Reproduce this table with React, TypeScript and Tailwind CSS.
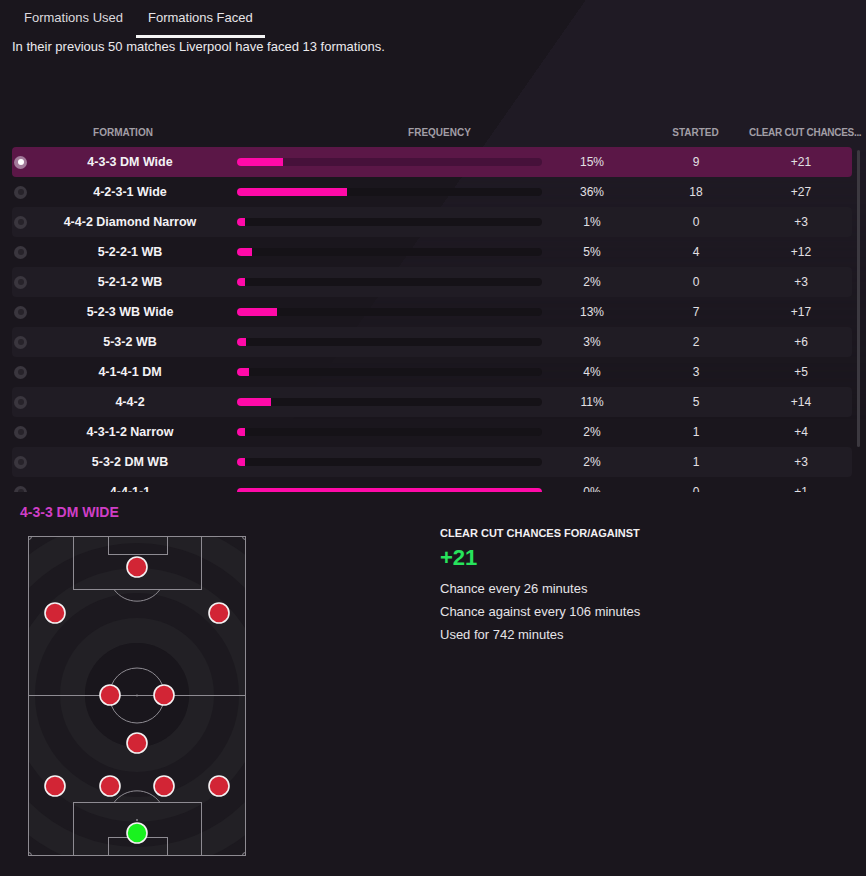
import React from "react";

type Row = { name: string; pct: number; started: number; ccc: string; full?: boolean };

const rows: Row[] = [
  { name: "4-3-3 DM Wide", pct: 15, started: 9, ccc: "+21" },
  { name: "4-2-3-1 Wide", pct: 36, started: 18, ccc: "+27" },
  { name: "4-4-2 Diamond Narrow", pct: 1, started: 0, ccc: "+3" },
  { name: "5-2-2-1 WB", pct: 5, started: 4, ccc: "+12" },
  { name: "5-2-1-2 WB", pct: 2, started: 0, ccc: "+3" },
  { name: "5-2-3 WB Wide", pct: 13, started: 7, ccc: "+17" },
  { name: "5-3-2 WB", pct: 3, started: 2, ccc: "+6" },
  { name: "4-1-4-1 DM", pct: 4, started: 3, ccc: "+5" },
  { name: "4-4-2", pct: 11, started: 5, ccc: "+14" },
  { name: "4-3-1-2 Narrow", pct: 2, started: 1, ccc: "+4" },
  { name: "5-3-2 DM WB", pct: 2, started: 1, ccc: "+3" },
  { name: "4-4-1-1", pct: 0, started: 0, ccc: "+1", full: true },
];

const players: [number, number, boolean?][] = [
  [109, 31],
  [27, 77],
  [191, 77],
  [82, 159],
  [136, 159],
  [109, 207],
  [27, 250],
  [82, 250],
  [136, 250],
  [191, 250],
  [109, 297, true],
];

function Radio({ on }: { on: boolean }) {
  if (on) {
    return (
      <div className="w-[13px] h-[13px] rounded-full bg-[#a27b9a] flex items-center justify-center">
        <div className="w-[6px] h-[6px] rounded-full bg-white" />
      </div>
    );
  }
  return (
    <div className="w-[13px] h-[13px] rounded-full bg-[#3a363e] flex items-center justify-center">
      <div className="w-[6px] h-[6px] rounded-full bg-[#27232a]" />
    </div>
  );
}

function TableRow({ row, index }: { row: Row; index: number }) {
  const selected = index === 0;
  const bg = selected ? "bg-[#5b1747]" : index % 2 === 0 ? "bg-[#201c24]" : "bg-transparent";
  const fill = row.full ? "100%" : `${Math.max(row.pct * 3.05, 8)}px`;
  return (
    <div className={`flex items-center h-[30px] shrink-0 rounded-[4px] ${bg}`}>
      <div className="w-[18px] pl-[2px] flex items-center">
        <Radio on={selected} />
      </div>
      <div className="w-[200px] text-center text-[12.5px] font-bold text-[#f4f2f5] whitespace-nowrap">
        {row.name}
      </div>
      <div className={`ml-[7px] w-[305px] h-[8px] rounded-full ${selected ? "bg-[#46113a]" : "bg-[#151217]"}`}>
        <div
          className={`h-full bg-[#ff0aa8] ${row.full ? "rounded-full" : "rounded-l-full"}`}
          style={{ width: fill }}
        />
      </div>
      <div className="w-[100px] text-center text-[12px] text-[#e2e0e4]">{row.pct}%</div>
      <div className="w-[108px] text-center text-[12px] text-[#e2e0e4]">{row.started}</div>
      <div className="w-[102px] text-center text-[12px] text-[#e2e0e4]">{row.ccc}</div>
    </div>
  );
}

function Pitch() {
  const line = "#8e8b92";
  const rings = [202, 177, 152, 127, 102, 77, 52];
  return (
    <svg width="218" height="320" viewBox="0 0 218 320" className="block">
      <defs>
        <clipPath id="pitchclip">
          <rect x="0" y="0" width="218" height="320" />
        </clipPath>
      </defs>
      <g clipPath="url(#pitchclip)">
        <rect x="0" y="0" width="218" height="320" fill="#1c191f" />
        {rings.map((r, i) => (
          <circle key={r} cx="109" cy="159" r={r} fill={i % 2 === 0 ? "#1c191f" : "#222025"} />
        ))}
        <circle cx="109" cy="159" r="52" fill="#19161c" />
      </g>
      <g fill="none" stroke={line} strokeWidth="1">
        <rect x="0.5" y="0.5" width="217" height="319" />
        <rect x="45.5" y="0.5" width="128" height="53" />
        <rect x="80.5" y="0.5" width="59" height="18" />
        <path d="M 86 53.5 A 28.5 28.5 0 0 0 132 53.5" />
        <line x1="0" y1="159.5" x2="218" y2="159.5" />
        <circle cx="109" cy="159.5" r="27.5" />
        <rect x="45.5" y="266.5" width="128" height="53" />
        <rect x="80.5" y="301.5" width="59" height="18" />
        <path d="M 86 266.5 A 28.5 28.5 0 0 1 132 266.5" />
        <path d="M 0.5 3.5 A 3 3 0 0 0 3.5 0.5" />
        <path d="M 214.5 0.5 A 3 3 0 0 0 217.5 3.5" />
        <path d="M 0.5 316.5 A 3 3 0 0 1 3.5 319.5" />
        <path d="M 214.5 319.5 A 3 3 0 0 1 217.5 316.5" />
      </g>
      <circle cx="109" cy="159.5" r="1" fill={line} />
      <circle cx="109" cy="284" r="1" fill={line} />
      {players.map(([x, y, gk], i) => (
        <circle
          key={i}
          cx={x}
          cy={y}
          r="10"
          fill={gk ? "#19f21f" : "#d22535"}
          stroke="#f4f1f2"
          strokeWidth="1.6"
        />
      ))}
    </svg>
  );
}

export default function App() {
  return (
    <div className="relative w-[866px] h-[876px] overflow-hidden bg-[#1a161d] font-['Liberation_Sans',Arial,sans-serif]">
      {/* diagonal light panel behind the top of the page */}
      <div className="absolute left-0 top-0 w-[866px] h-[420px] pointer-events-none bg-[linear-gradient(125deg,transparent_50.5%,#1f1a24_50.5%)] [mask-image:linear-gradient(to_bottom,black_35%,transparent)]" />

      <div className="relative flex flex-col">
        <div className="flex pl-[12px] gap-[1px]">
          <div className="h-[38px] px-[12px] flex items-center pb-[3px] text-[13px] text-[#dcd9de]">
            Formations Used
          </div>
          <div className="h-[38px] px-[12px] flex items-center pb-[3px] text-[13px] text-[#e6e4e8] border-b-[3px] border-[#f4f4f4]">
            <span className="-mb-[3px]">Formations Faced</span>
          </div>
        </div>
        <p className="pl-[12px] h-[18px] leading-[18px] text-[13px] text-[#eceaee]">
          In their previous 50 matches Liverpool have faced 13 formations.
        </p>

        <div className="mt-[66px] pl-[12px] flex items-center h-[20px] text-[10px] font-bold text-[#a29ea6] whitespace-nowrap">
          <div className="w-[18px]" />
          <div className="w-[200px] text-center pr-[14px]">FORMATION</div>
          <div className="ml-[7px] w-[405px] text-center">FREQUENCY</div>
          <div className="w-[107px] text-center">STARTED</div>
          <div className="w-[113px] tracking-[-0.3px]">CLEAR CUT CHANCES...</div>
        </div>

        <div className="mt-[5px] pl-[12px] flex">
          <div className="w-[840px] h-[345px] overflow-hidden flex flex-col">
            {rows.map((r, i) => (
              <TableRow key={r.name} row={r} index={i} />
            ))}
          </div>
          <div className="ml-[5px] mt-[3px] w-[3px] h-[297px] rounded-full bg-[#3c3940]" />
        </div>

        <div className="mt-[10px] flex">
          <div className="pl-[20px] w-[440px] flex flex-col">
            <div className="h-[20px] leading-[20px] text-[14px] font-bold text-[#cf3fc6]">4-3-3 DM WIDE</div>
            <div className="mt-[14px] ml-[8px]">
              <Pitch />
            </div>
          </div>
          <div className="flex flex-col pt-[23px]">
            <div className="h-[16px] leading-[16px] text-[11px] font-bold text-[#f2f0f3]">
              CLEAR CUT CHANCES FOR/AGAINST
            </div>
            <div className="mt-[3px] h-[28px] leading-[28px] text-[22px] font-bold text-[#27e35c]">+21</div>
            <div className="mt-[5px] flex flex-col text-[13px] text-[#e6e4e8] leading-[23px]">
              <span>Chance every 26 minutes</span>
              <span>Chance against every 106 minutes</span>
              <span>Used for 742 minutes</span>
            </div>
          </div>
        </div>
      </div>
    </div>
  );
}
